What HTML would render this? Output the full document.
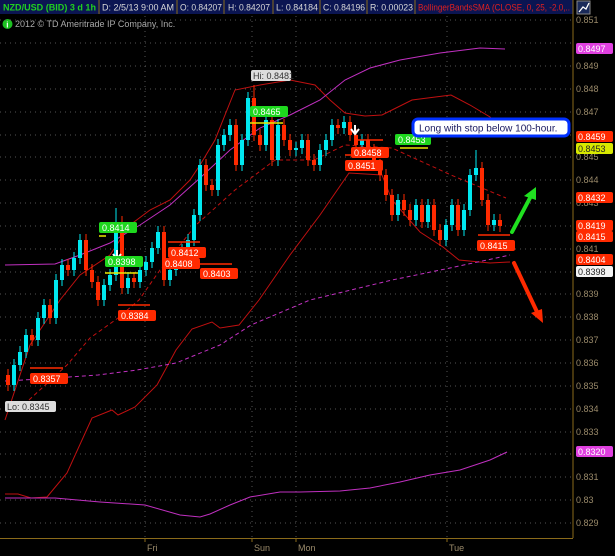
<!DOCTYPE html>
<html><head><meta charset="utf-8"><style>
html,body{margin:0;padding:0;background:#000;width:615px;height:556px;overflow:hidden}
body{font-family:"Liberation Sans",sans-serif}
</style></head><body>
<svg width="615" height="556" xmlns="http://www.w3.org/2000/svg" style="position:absolute;left:0;top:0" font-family="Liberation Sans, sans-serif">
<rect width="615" height="556" fill="#000"/>
<rect x="0" y="0" width="573" height="14" fill="#0b1552"/>
<g stroke="#8a6a1a" stroke-width="1"><line x1="99" y1="0" x2="99" y2="14"/><line x1="177" y1="0" x2="177" y2="14"/><line x1="224" y1="0" x2="224" y2="14"/><line x1="273" y1="0" x2="273" y2="14"/><line x1="320" y1="0" x2="320" y2="14"/><line x1="367" y1="0" x2="367" y2="14"/><line x1="415" y1="0" x2="415" y2="14"/><line x1="573" y1="0" x2="573" y2="14"/></g>
<g font-size="9" fill="#d8d8d8">
<text x="3" y="10.5" fill="#20d020" font-weight="bold" textLength="93" lengthAdjust="spacingAndGlyphs">NZD/USD (BID) 3 d 1h</text>
<text x="102" y="10.5" textLength="72" lengthAdjust="spacingAndGlyphs">D: 2/5/13 9:00 AM</text>
<text x="180" y="10.5" textLength="42" lengthAdjust="spacingAndGlyphs">O: 0.84207</text>
<text x="228" y="10.5" textLength="42" lengthAdjust="spacingAndGlyphs">H: 0.84207</text>
<text x="276" y="10.5" textLength="42" lengthAdjust="spacingAndGlyphs">L: 0.84184</text>
<text x="323" y="10.5" textLength="42" lengthAdjust="spacingAndGlyphs">C: 0.84196</text>
<text x="370" y="10.5" textLength="43" lengthAdjust="spacingAndGlyphs">R: 0.00023</text>
<text x="418" y="10.5" fill="#e02020" textLength="152" lengthAdjust="spacingAndGlyphs">BollingerBandsSMA (CLOSE, 0, 25, -2.0,..</text>
</g>
<rect x="577" y="1" width="13" height="13" fill="#1a2a5a" stroke="#888"/>
<path d="M579 12 L583 7 L586 9 L589 3" stroke="#fff" fill="none" stroke-width="1.3"/>
<circle cx="7.5" cy="24" r="5" fill="#1cc020"/>
<text x="6.3" y="27.5" font-size="8" fill="#fff" font-weight="bold">i</text>
<text x="15" y="27" font-size="9" fill="#aaa">2012 © TD Ameritrade IP Company, Inc.</text>
<g stroke="#555" stroke-dasharray="1,4" stroke-width="1">
<line x1="0" y1="20" x2="573" y2="20"/><line x1="0" y1="43" x2="573" y2="43"/><line x1="0" y1="66" x2="573" y2="66"/><line x1="0" y1="89" x2="573" y2="89"/><line x1="0" y1="112" x2="573" y2="112"/><line x1="0" y1="135" x2="573" y2="135"/><line x1="0" y1="157" x2="573" y2="157"/><line x1="0" y1="180" x2="573" y2="180"/><line x1="0" y1="203" x2="573" y2="203"/><line x1="0" y1="226" x2="573" y2="226"/><line x1="0" y1="249" x2="573" y2="249"/><line x1="0" y1="272" x2="573" y2="272"/><line x1="0" y1="294" x2="573" y2="294"/><line x1="0" y1="317" x2="573" y2="317"/><line x1="0" y1="340" x2="573" y2="340"/><line x1="0" y1="363" x2="573" y2="363"/><line x1="0" y1="386" x2="573" y2="386"/><line x1="0" y1="409" x2="573" y2="409"/><line x1="0" y1="432" x2="573" y2="432"/><line x1="0" y1="454" x2="573" y2="454"/><line x1="0" y1="477" x2="573" y2="477"/><line x1="0" y1="500" x2="573" y2="500"/><line x1="0" y1="523" x2="573" y2="523"/>
<line x1="145" y1="16" x2="145" y2="538"/><line x1="252" y1="16" x2="252" y2="538"/><line x1="296" y1="16" x2="296" y2="538"/><line x1="447" y1="16" x2="447" y2="538"/>
</g>
<g stroke="#8a6a1a"><line x1="573" y1="14" x2="573" y2="538"/><line x1="0" y1="538.5" x2="573" y2="538.5"/>
<line x1="145" y1="538" x2="145" y2="542"/><line x1="252" y1="538" x2="252" y2="542"/><line x1="296" y1="538" x2="296" y2="542"/><line x1="447" y1="538" x2="447" y2="542"/></g>
<g font-size="9" fill="#9a8a6a">
<text x="576" y="23">0.851</text><text x="576" y="69">0.849</text><text x="576" y="92">0.848</text><text x="576" y="115">0.847</text><text x="576" y="160">0.845</text><text x="576" y="183">0.844</text><text x="576" y="206">0.843</text><text x="576" y="252">0.841</text><text x="576" y="297">0.839</text><text x="576" y="320">0.838</text><text x="576" y="343">0.837</text><text x="576" y="366">0.836</text><text x="576" y="389">0.835</text><text x="576" y="412">0.834</text><text x="576" y="435">0.833</text><text x="576" y="480">0.831</text><text x="576" y="503">0.83</text><text x="576" y="526">0.829</text>
<text x="147" y="551">Fri</text><text x="254" y="551">Sun</text><text x="298" y="551">Mon</text><text x="449" y="551">Tue</text>
</g>
<g fill="none" stroke-width="1">
<polyline stroke="#c01010" points="5,420 30,345 60,300 80,275 110,255 130,225 150,210 170,200 190,180 200,165 215,140 235,90 260,85 290,80 315,85 330,100 345,113 365,116 382,115 392,110 412,100 451,95 470,105 490,117 505,135"/>
<polyline stroke="#c01010" stroke-dasharray="4,3" points="29,400 67,365 90,338 118,318 139,300 160,270 196,225 235,190 275,160 314,160 345,145 392,148 451,175 506,198"/>
<polyline stroke="#c01010" points="5,494 18,494 31,498 47,497 67,473 92,418 112,410 118,415 135,407 157,385 176,350 192,329 212,322 220,328 239,325 259,300 290,255 320,215 349,173 382,175 392,200 420,232 443,247 459,260 490,263 510,262"/>
<polyline stroke="#c030c0" points="5,265 55,264 80,255 110,243 140,225 170,205 200,178 230,150 260,128 290,115 320,100 345,80 370,68 400,60 440,53 480,48 505,49"/>
<polyline stroke="#c030c0" stroke-dasharray="4,3" points="5,381 40,379 98,375 137,370 176,363 220,345 251,325 310,300 392,280 450,268 510,255"/>
<polyline stroke="#c030c0" points="5,498 55,498 100,502 145,505 180,515 200,517 210,514 230,505 250,497 280,492 300,492 340,491 370,488 400,482 430,475 460,470 490,460 507,452"/>
</g>
<path stroke="#ff2a00" d="M8 369V391M32 329V346M50 299V324M68 259V276M86 234V276M92 264V288M98 276V306M122 216V294M134 272V288M164 226V286M206 159V191M212 179V196M236 119V171M254 85V141M260 129V151M272 114V166M284 119V146M290 134V156M308 134V166M314 154V171M338 119V134M350 116V141M356 129V151M368 134V156M374 144V171M380 159V181M386 169V201M392 189V221M404 194V216M410 204V226M422 199V228M434 199V236M440 224V246M458 199V236M482 162V206M488 194V231M500 214V232"/>
<path stroke="#00e8f0" d="M14 359V391M20 346V371M26 329V358M38 312V346M44 299V324M56 274V324M62 259V286M74 252V276M80 234V264M104 279V306M110 269V291M116 208V281M128 272V294M140 264V288M146 256V276M152 242V268M158 226V254M170 264V286M176 254V276M182 244V266M188 234V256M194 209V246M200 159V221M218 139V196M224 129V151M230 119V141M242 134V171M248 92V146M266 114V151M278 119V166M296 142V156M302 134V154M320 144V171M326 134V156M332 119V146M344 116V134M362 134V151M398 194V221M416 199V226M428 199V228M446 219V246M452 199V231M464 204V236M470 169V216M476 150V181M494 214V231"/>
<g fill="#ff2a00">
<rect x="6" y="375" width="4" height="10"/><rect x="30" y="335" width="4" height="5"/><rect x="48" y="305" width="4" height="13"/><rect x="66" y="265" width="4" height="5"/><rect x="84" y="240" width="4" height="30"/><rect x="90" y="270" width="4" height="12"/><rect x="96" y="282" width="4" height="18"/><rect x="120" y="222" width="4" height="66"/><rect x="132" y="278" width="4" height="4"/><rect x="162" y="232" width="4" height="48"/><rect x="204" y="165" width="4" height="20"/><rect x="210" y="185" width="4" height="5"/><rect x="234" y="125" width="4" height="40"/><rect x="252" y="98" width="4" height="37"/><rect x="258" y="135" width="4" height="10"/><rect x="270" y="120" width="4" height="40"/><rect x="282" y="125" width="4" height="15"/><rect x="288" y="140" width="4" height="10"/><rect x="306" y="140" width="4" height="20"/><rect x="312" y="160" width="4" height="5"/><rect x="336" y="125" width="4" height="3"/><rect x="348" y="122" width="4" height="13"/><rect x="354" y="135" width="4" height="10"/><rect x="366" y="140" width="4" height="10"/><rect x="372" y="150" width="4" height="15"/><rect x="378" y="165" width="4" height="10"/><rect x="384" y="175" width="4" height="20"/><rect x="390" y="195" width="4" height="20"/><rect x="402" y="200" width="4" height="10"/><rect x="408" y="210" width="4" height="10"/><rect x="420" y="205" width="4" height="17"/><rect x="432" y="205" width="4" height="25"/><rect x="438" y="230" width="4" height="10"/><rect x="456" y="205" width="4" height="25"/><rect x="480" y="168" width="4" height="32"/><rect x="486" y="200" width="4" height="25"/><rect x="498" y="220" width="4" height="6"/>
</g>
<g fill="#00e8f0">
<rect x="12" y="365" width="4" height="20"/><rect x="18" y="352" width="4" height="13"/><rect x="24" y="335" width="4" height="17"/><rect x="36" y="318" width="4" height="22"/><rect x="42" y="305" width="4" height="13"/><rect x="54" y="280" width="4" height="38"/><rect x="60" y="265" width="4" height="15"/><rect x="72" y="258" width="4" height="12"/><rect x="78" y="240" width="4" height="18"/><rect x="102" y="285" width="4" height="15"/><rect x="108" y="275" width="4" height="10"/><rect x="114" y="222" width="4" height="53"/><rect x="126" y="278" width="4" height="10"/><rect x="138" y="270" width="4" height="12"/><rect x="144" y="262" width="4" height="8"/><rect x="150" y="248" width="4" height="14"/><rect x="156" y="232" width="4" height="16"/><rect x="168" y="270" width="4" height="10"/><rect x="174" y="260" width="4" height="10"/><rect x="180" y="250" width="4" height="10"/><rect x="186" y="240" width="4" height="10"/><rect x="192" y="215" width="4" height="25"/><rect x="198" y="165" width="4" height="50"/><rect x="216" y="145" width="4" height="45"/><rect x="222" y="135" width="4" height="10"/><rect x="228" y="125" width="4" height="10"/><rect x="240" y="140" width="4" height="25"/><rect x="246" y="98" width="4" height="42"/><rect x="264" y="120" width="4" height="25"/><rect x="276" y="125" width="4" height="35"/><rect x="294" y="148" width="4" height="2"/><rect x="300" y="140" width="4" height="8"/><rect x="318" y="150" width="4" height="15"/><rect x="324" y="140" width="4" height="10"/><rect x="330" y="125" width="4" height="15"/><rect x="342" y="122" width="4" height="6"/><rect x="360" y="140" width="4" height="5"/><rect x="396" y="200" width="4" height="15"/><rect x="414" y="205" width="4" height="15"/><rect x="426" y="205" width="4" height="17"/><rect x="444" y="225" width="4" height="15"/><rect x="450" y="205" width="4" height="20"/><rect x="462" y="210" width="4" height="20"/><rect x="468" y="175" width="4" height="35"/><rect x="474" y="168" width="4" height="7"/><rect x="492" y="220" width="4" height="5"/>
</g>
<g stroke-width="1.5">
<line x1="250" y1="123" x2="283" y2="123" stroke="#e8e800"/>
<line x1="400" y1="148" x2="428" y2="148" stroke="#e8e800"/>
<line x1="105" y1="273" x2="138" y2="273" stroke="#e8e800"/>
<line x1="99" y1="236" x2="106" y2="236" stroke="#e8e800"/>
<line x1="168" y1="242" x2="200" y2="242" stroke="#ff2a00"/>
<line x1="200" y1="264" x2="232" y2="264" stroke="#ff2a00"/>
<line x1="118" y1="305" x2="150" y2="305" stroke="#ff2a00"/>
<line x1="30" y1="368" x2="63" y2="368" stroke="#ff2a00"/>
<line x1="478" y1="235" x2="510" y2="235" stroke="#ff2a00"/>
<line x1="355" y1="140" x2="383" y2="140" stroke="#ff2a00"/>
<line x1="345" y1="155" x2="375" y2="155" stroke="#ff2a00"/>
</g>
<path d="M117 250 V258 M113 254 L117 259 L121 254" stroke="#fff" stroke-width="2" fill="none"/>
<path d="M355 125 V133 M351 129 L355 134 L359 129" stroke="#fff" stroke-width="2" fill="none"/>
<g font-size="9" fill="#fff">
<rect x="251" y="70" width="40" height="11" rx="2" fill="#ddd"/><text x="253" y="79" fill="#333">Hi: 0.8481</text>
<rect x="250" y="106" width="38" height="11" rx="2" fill="#1ed81e"/><text x="253" y="115">0.8465</text>
<rect x="395" y="134" width="36" height="11" rx="2" fill="#1ed81e"/><text x="398" y="143">0.8453</text>
<rect x="351" y="147" width="38" height="11" rx="2" fill="#ff2a00"/><text x="354" y="156">0.8458</text>
<rect x="345" y="160" width="38" height="11" rx="2" fill="#ff2a00"/><text x="348" y="169">0.8451</text>
<rect x="99" y="222" width="38" height="11" rx="2" fill="#1ed81e"/><text x="102" y="231">0.8414</text>
<rect x="105" y="256" width="38" height="11" rx="2" fill="#1ed81e"/><text x="108" y="265">0.8398</text>
<rect x="168" y="247" width="38" height="11" rx="2" fill="#ff2a00"/><text x="171" y="256">0.8412</text>
<rect x="162" y="258" width="38" height="11" rx="2" fill="#ff2a00"/><text x="165" y="267">0.8408</text>
<rect x="200" y="268" width="38" height="11" rx="2" fill="#ff2a00"/><text x="203" y="277">0.8403</text>
<rect x="118" y="310" width="38" height="11" rx="2" fill="#ff2a00"/><text x="121" y="319">0.8384</text>
<rect x="30" y="373" width="38" height="11" rx="2" fill="#ff2a00"/><text x="33" y="382">0.8357</text>
<rect x="5" y="401" width="51" height="11" rx="2" fill="#ddd"/><text x="7" y="410" fill="#333">Lo: 0.8345</text>
<rect x="477" y="240" width="38" height="11" rx="2" fill="#ff2a00"/><text x="480" y="249">0.8415</text>
<rect x="576" y="43" width="37" height="11" rx="2" fill="#e040e0"/><text x="578" y="52">0.8497</text>
<rect x="576" y="131" width="37" height="11" rx="2" fill="#ff2a00"/><text x="578" y="140">0.8459</text>
<rect x="576" y="143" width="37" height="11" rx="2" fill="#d8e800"/><text x="578" y="152" fill="#222">0.8453</text>
<rect x="576" y="192" width="37" height="11" rx="2" fill="#ff2a00"/><text x="578" y="201">0.8432</text>
<rect x="576" y="220" width="37" height="11" rx="2" fill="#ff2a00"/><text x="578" y="229">0.8419</text>
<rect x="576" y="231" width="37" height="11" rx="2" fill="#ff2a00"/><text x="578" y="240">0.8415</text>
<rect x="576" y="254" width="37" height="11" rx="2" fill="#ff2a00"/><text x="578" y="263">0.8404</text>
<rect x="576" y="266" width="37" height="11" rx="2" fill="#f4f4f4"/><text x="578" y="275" fill="#222">0.8398</text>
<rect x="576" y="446" width="37" height="11" rx="2" fill="#e040e0"/><text x="578" y="455">0.8320</text>
</g>
<rect x="413" y="119" width="156" height="17" rx="5" fill="#fff" stroke="#0030ff" stroke-width="3"/>
<text x="419" y="131.5" font-size="10" fill="#1a1a60">Long with stop below 100-hour.</text>
<path d="M512 232 L531 196" stroke="#20e020" stroke-width="4" fill="none" stroke-linecap="round"/>
<path d="M536 187 L524 196 L536 200 Z" fill="#20e020"/>
<path d="M514 263 L538 314" stroke="#ff2a00" stroke-width="4" fill="none" stroke-linecap="round"/>
<path d="M543 323 L531 313 L542 309 Z" fill="#ff2a00"/>
</svg>
</body></html>
